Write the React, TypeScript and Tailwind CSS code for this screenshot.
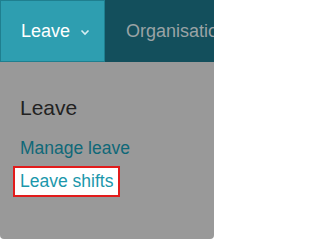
import React from 'react';

const App = () => {
  return (
    <div className="w-[214px] h-[239px] bg-white overflow-hidden font-['Liberation_Sans',Arial,sans-serif]">
      <nav className="flex h-[62px] bg-[#134f5c]">
        <div className="flex items-center w-[105px] shrink-0 pl-[20px] bg-[#2e9eb0] border border-[#1f7f8f] text-white text-[18px]">
          <span>Leave</span>
          <svg className="ml-[10px] mt-[2px]" width="10" height="7" viewBox="0 0 10 7" fill="none">
            <path d="M1.5 1.5 L5 5 L8.5 1.5" stroke="#d6eef2" strokeWidth="1.6" />
          </svg>
        </div>
        <div className="flex items-center pl-[21px] text-[18px] text-[#9aa3a5] whitespace-nowrap">
          Organisation
        </div>
      </nav>
      <div className="h-[177px] bg-[#999999] rounded-b-[4px] pt-[34px] px-[20px]">
        <h3 className="text-[21px] leading-[24px] text-[#222222]">Leave</h3>
        <div className="mt-[18px] text-[17.5px] leading-[20px] text-[#0f6878]">Manage leave</div>
        <div className="mt-[8px] -ml-[7px] inline-block bg-white border-2 border-[#e21b1b] px-[5px] py-[2px] text-[17.5px] leading-[23px] text-[#1b97ab]">
          Leave shifts
        </div>
      </div>
    </div>
  );
};

export default App;
